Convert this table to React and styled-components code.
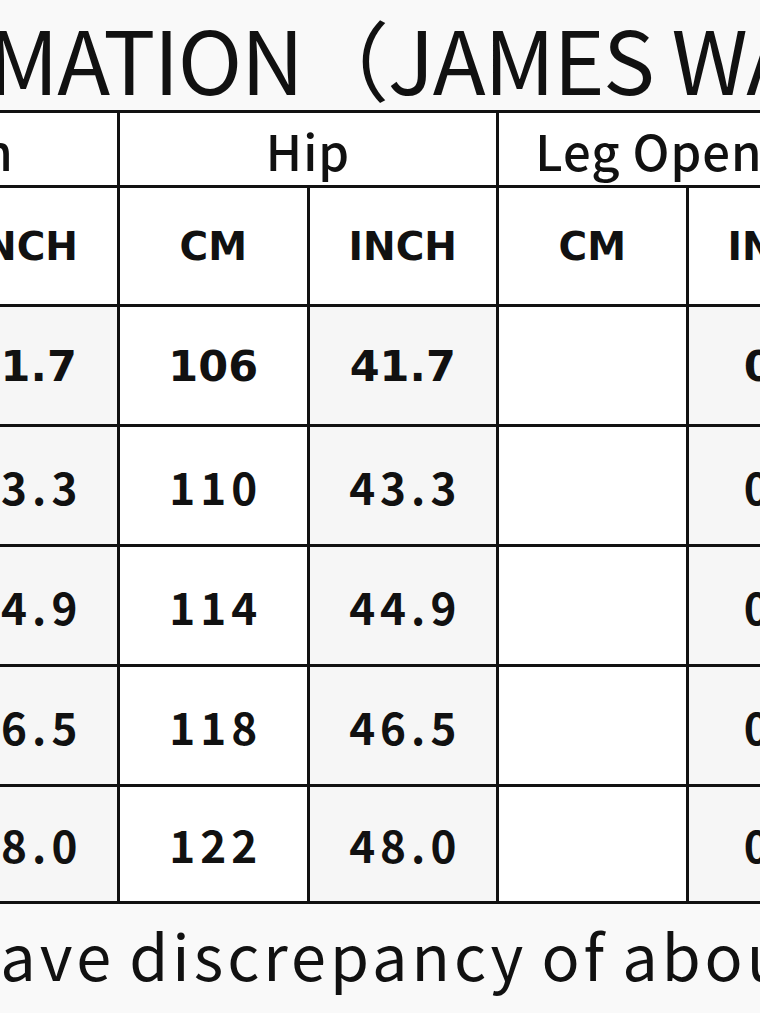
import React from 'react';
import styled, { createGlobalStyle } from 'styled-components';

const GlobalStyle = createGlobalStyle`
  html, body {
    margin: 0;
    padding: 0;
    background: #f9f9f9;
    overflow: hidden;
  }
`;

const Page = styled.div`
  width: 760px;
  height: 1013px;
  overflow: hidden;
  background: #f9f9f9;
  color: #111;
`;

const Title = styled.h1`
  margin: 0 0 0 -12px;
  height: 110px;
  font-family: 'Noto Sans CJK SC', 'Noto Sans', sans-serif;
  font-weight: 400;
  font-size: 87px;
  line-height: 114px;
  letter-spacing: -1.5px;
  white-space: nowrap;
`;

const Table = styled.table`
  margin-left: -262px;
  border-collapse: collapse;
  table-layout: fixed;
  width: 1140px;
  background: #fff;
  td {
    border: 3px solid #111;
    text-align: center;
    padding: 0;
  }
`;

const GroupCell = styled.td`
  height: 72px;
  font-family: 'Noto Sans CJK SC', 'Noto Sans', sans-serif;
  font-size: 49px;
  font-weight: 500;
  letter-spacing: 1px;
  background: #fff;
`;

const UnitCell = styled.td`
  height: 116px;
  font-family: 'DejaVu Sans', Verdana, sans-serif;
  font-weight: 700;
  font-size: 39px;
  background: #fff;
`;

const ValueCell = styled.td`
  height: ${(p) => p.$h}px;
  background: ${(p) => (p.$shade ? '#f6f6f6' : '#fff')};
  font-family: ${(p) =>
    p.$heavy
      ? "'DejaVu Sans', Verdana, sans-serif"
      : "'Noto Sans CJK SC', 'Noto Sans', sans-serif"};
  font-weight: 700;
  font-size: ${(p) => (p.$heavy ? 43 : 44)}px;
  letter-spacing: ${(p) => (p.$heavy ? 0 : 5)}px;
  text-indent: ${(p) => (p.$heavy ? 0 : 5)}px;
`;

const Note = styled.p`
  margin: 0 0 0 -42px;
  font-family: 'Noto Sans CJK SC', 'Noto Sans', sans-serif;
  font-size: 63px;
  line-height: 100px;
  letter-spacing: 4px;
  word-spacing: -4px;
  white-space: nowrap;
`;

const groups = ['Length', 'Hip', 'Leg Opening'];
const rows = [
  { h: 117, v: ['106', '41.7', '106', '41.7', '', '0.0'] },
  { h: 117, v: ['110', '43.3', '110', '43.3', '', '0.0'] },
  { h: 117, v: ['114', '44.9', '114', '44.9', '', '0.0'] },
  { h: 117, v: ['118', '46.5', '118', '46.5', '', '0.0'] },
  { h: 114, v: ['122', '48.0', '122', '48.0', '', '0.0'] },
];

export default function App() {
  return (
    <Page>
      <GlobalStyle />
      <Title>MATION（JAMES WAIST）</Title>
      <Table>
        <tbody>
          <tr>
            {groups.map((g) => (
              <GroupCell key={g} colSpan={2}>
                {g}
              </GroupCell>
            ))}
          </tr>
          <tr>
            {groups.map((g) => (
              <React.Fragment key={g}>
                <UnitCell>CM</UnitCell>
                <UnitCell>INCH</UnitCell>
              </React.Fragment>
            ))}
          </tr>
          {rows.map((r, i) => (
            <tr key={i}>
              {r.v.map((val, j) => (
                <ValueCell key={j} $h={r.h} $shade={j % 2 === 1} $heavy={i === 0}>
                  {val}
                </ValueCell>
              ))}
            </tr>
          ))}
        </tbody>
      </Table>
      <Note>have discrepancy of about 1-3cm</Note>
    </Page>
  );
}
